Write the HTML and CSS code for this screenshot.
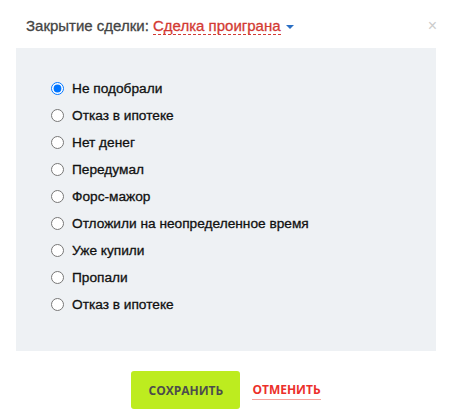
FILE: index.html
```html
<!DOCTYPE html>
<html lang="ru">
<head>
  <meta charset="UTF-8" />
  <title>Закрытие сделки</title>
  <link rel="stylesheet" href="styles.css">
</head>
<body>
  <div class="modal">
    <div class="modal-head">
      <h2>Закрытие сделки: <span class="status">Сделка проиграна</span> <span class="caret"></span></h2>
      <span class="close">&times;</span>
    </div>

    <div class="reasons">
      <label><input type="radio" name="reason" checked> Не подобрали</label>
      <label><input type="radio" name="reason"> Отказ в ипотеке</label>
      <label><input type="radio" name="reason"> Нет денег</label>
      <label><input type="radio" name="reason"> Передумал</label>
      <label><input type="radio" name="reason"> Форс-мажор</label>
      <label><input type="radio" name="reason"> Отложили на неопределенное время</label>
      <label><input type="radio" name="reason"> Уже купили</label>
      <label><input type="radio" name="reason"> Пропали</label>
      <label><input type="radio" name="reason"> Отказ в ипотеке</label>
    </div>

    <div class="actions">
      <button class="btn-save">Сохранить</button>
      <a href="#" class="btn-cancel">Отменить</a>
    </div>
  </div>
</body>
</html>
```

FILE: styles.css
```css
body {
  margin: 0;
  background: #fff;
  font-family: Arial, "Liberation Sans", sans-serif;
}

.modal {
  width: 420px;
  padding: 0 16px;
}

.modal-head {
  display: flex;
  justify-content: space-between;
  align-items: center;
  height: 48px;
}

.modal-head h2 {
  margin: 0 0 0 10px;
  font-size: 15px;
  font-weight: normal;
  -webkit-text-stroke: 0.3px currentColor;
  color: #444;
  position: relative;
  top: 1px;
}

.status {
  color: #d33a33;
  border-bottom: 1px dashed #d33a33;
}

.caret {
  display: inline-block;
  width: 0;
  height: 0;
  margin-left: 1px;
  border-left: 4px solid transparent;
  border-right: 4px solid transparent;
  border-top: 4px solid #2a6fc4;
  vertical-align: middle;
}

.close {
  font-size: 16px;
  color: #ccc;
  margin-right: -1px;
  position: relative;
  top: 2px;
}

.reasons {
  background: #eef1f4;
  height: 303px;
  box-sizing: border-box;
  padding: 27px 0 0 34px;
  display: flex;
  flex-direction: column;
}

.reasons label {
  display: flex;
  align-items: center;
  height: 27px;
  font-size: 13.7px;
  -webkit-text-stroke: 0.3px currentColor;
  color: #111;
}

.reasons input {
  margin: 0 8px 0 1px;
  width: 13px;
  height: 13px;
}

.actions {
  display: flex;
  justify-content: center;
  align-items: center;
  gap: 12px;
  padding-top: 20px;
}

.btn-save {
  width: 109px;
  height: 38px;
  border: none;
  border-radius: 3px;
  background: #bdec1f;
  color: #4c4c4c;
  font-family: "Open Sans", sans-serif;
  font-size: 12px;
  font-weight: bold;
  text-transform: uppercase;
}

.btn-cancel {
  color: #ec2f2a;
  font-family: "Open Sans", sans-serif;
  font-size: 12px;
  font-weight: bold;
  text-transform: uppercase;
  text-decoration: none;
  border-bottom: 1px solid #f5a59f;
  padding-bottom: 1px;
}
```
